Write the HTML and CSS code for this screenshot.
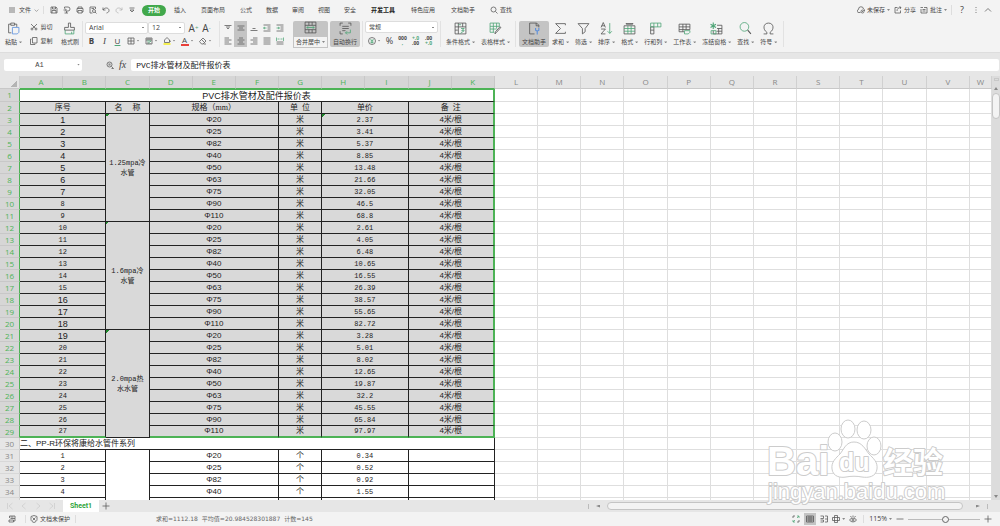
FILE: index.html
```html
<!DOCTYPE html>
<html lang="zh-CN">
<head>
    <meta charset="UTF-8">
    <meta name="viewport" content="width=device-width, initial-scale=1.0">
    <title>PVC排水管材及配件报价表</title>
    <link rel="stylesheet" href="styles.css">
</head>
<body>
    <!-- 图标 -->
    <svg class="sprite" aria-hidden="true">
        <symbol id="i-menu" viewBox="0 0 16 16"><path d="M2 4h12M2 8h12M2 12h12"/></symbol>
        <symbol id="i-down" viewBox="0 0 16 16"><path d="M2 5l6 6 6-6"/></symbol>
        <symbol id="i-up" viewBox="0 0 16 16"><path d="M2 11l6-6 6 6"/></symbol>
        <symbol id="i-save" viewBox="0 0 16 16"><path d="M2 2h10l2 2v10H2zM5 2v4h6V2M4 14V9h8v5"/></symbol>
        <symbol id="i-export" viewBox="0 0 16 16"><path d="M3 5V2h7a4 4 0 0 1 0 8H7v4M1 8h5M4 5l3 3-3 3M3 14h7"/></symbol>
        <symbol id="i-print" viewBox="0 0 16 16"><path d="M4 5V2h8v3M4 12H2V5h12v7h-2M4 9h8v5H4z"/></symbol>
        <symbol id="i-preview" viewBox="0 0 16 16"><path d="M13 6V2H2v12h5M5 5h5"/><circle cx="10" cy="10" r="3"/><path d="M12 12l3 3"/></symbol>
        <symbol id="i-undo" viewBox="0 0 16 16"><path d="M2 3v5h5M2 8c3-6 12-5 12 1 0 3-2 4-5 5"/></symbol>
        <symbol id="i-redo" viewBox="0 0 16 16"><path d="M14 3v5H9M14 8C11 2 2 3 2 9c0 3 2 4 5 5"/></symbol>
        <symbol id="i-more" viewBox="0 0 16 16"><path d="M3 4h10M4 8l4 4 4-4z"/></symbol>
        <symbol id="i-search" viewBox="0 0 16 16"><circle cx="7" cy="7" r="5"/><path d="M11 11l4 4"/></symbol>
        <symbol id="i-lookup" viewBox="0 0 16 16"><circle cx="7" cy="7" r="5"/><path d="M11 11l4 4M5 6h4M5 8h4M11 15h4"/></symbol>
        <symbol id="i-cloud" viewBox="0 0 16 16"><path d="M7 13H4a3 3 0 0 1-1-6 5 5 0 0 1 10-1 3 3 0 0 1 2 4"/><circle cx="11" cy="11" r="3"/><path d="M10 11h2"/></symbol>
        <symbol id="i-share" viewBox="0 0 16 16"><path d="M7 3H2v11h11V9M6 10c0-5 3-7 8-7M11 1l3 2-2 3"/></symbol>
        <symbol id="i-note" viewBox="0 0 16 16"><path d="M2 6v8h12V3H8M1 3h5M5 7h6M5 10h6"/></symbol>
        <symbol id="i-dots" viewBox="0 0 16 16"><path d="M8 2v2M8 7v2M8 12v2"/></symbol>

        <symbol id="i-paste" viewBox="0 0 24 24"><path d="M8 20H3V4h4M14 4h4v5M7 2h7v4H7z"/><path class="blue" d="M10 10h12v9l-3 3h-9z"/></symbol>
        <symbol id="i-cut" viewBox="0 0 16 16"><path d="M2 2l9 9M14 2l-9 9"/><circle cx="4" cy="12" r="2"/><circle cx="12" cy="12" r="2"/></symbol>
        <symbol id="i-copy" viewBox="0 0 16 16"><path d="M5 1h9v11H5zM3 4H1v11h9v-2"/></symbol>
        <symbol id="i-brush" viewBox="0 0 24 24"><path d="M10 2h4v8h7v5H3v-5h7z"/><path class="green" d="M4 15v7h16v-7M16 18v4"/></symbol>
        <symbol id="i-border" viewBox="0 0 16 16"><path d="M2 2h12v12H2zM8 2v12M2 8h12"/></symbol>
        <symbol id="i-cellstyle" viewBox="0 0 16 16"><path d="M2 2h12v12H2zM2 6h12M6 2v4M10 2v4M6 10v4M10 12v2"/><path class="green" d="M4 8l8 0-6 5"/></symbol>
        <symbol id="i-bucket" viewBox="0 0 16 16"><path d="M3 6l5-5 5 5v5H3zM13 6l2 4"/><path class="yellow" d="M1 14h14"/></symbol>
        <symbol id="i-eraser" viewBox="0 0 16 16"><path d="M1 9l7-7 6 6-6 6H5zM5 5l6 6M9 14h5"/></symbol>
        <symbol id="i-atop" viewBox="0 0 16 16"><path d="M1 3h14M4 6h8M6 9h4"/></symbol>
        <symbol id="i-amid" viewBox="0 0 16 16"><path d="M1 4h14M4 8h8M1 12h14"/></symbol>
        <symbol id="i-abot" viewBox="0 0 16 16"><path d="M5 9h6M1 13h14"/></symbol>
        <symbol id="i-outdent" viewBox="0 0 16 16"><path d="M1 2h14M9 6h6M9 10h6M1 14h14"/><path class="green" d="M7 8H1M4 6L1 8l3 2"/></symbol>
        <symbol id="i-indent" viewBox="0 0 16 16"><path d="M1 2h14M9 6h6M9 10h6M1 14h14"/><path class="green" d="M1 8h6M4 6l3 2-3 2"/></symbol>
        <symbol id="i-left" viewBox="0 0 16 16"><path d="M1 2h9M1 6h14M1 10h9M1 14h14"/></symbol>
        <symbol id="i-center" viewBox="0 0 16 16"><path d="M4 2h8M1 6h14M4 10h8M1 14h14"/></symbol>
        <symbol id="i-right" viewBox="0 0 16 16"><path d="M6 2h9M1 6h14M6 10h9M1 14h14"/></symbol>
        <symbol id="i-justify" viewBox="0 0 16 16"><path d="M1 2h14M1 6h14M1 10h14M1 14h14"/></symbol>
        <symbol id="i-spread" viewBox="0 0 16 16"><path d="M1 10h14M1 14h14"/><path class="green" d="M1 1v7M15 1v7M3 4h4M9 4h4"/></symbol>
        <symbol id="i-merge" viewBox="0 0 24 24"><path d="M2 2h20v20H2zM2 8h20M2 16h20M9 2v6M15 2v6M9 16v6M15 16v6"/><path class="green" d="M5 12h14M8 10l-3 2 3 2M16 10l3 2-3 2"/></symbol>
        <symbol id="i-wrap" viewBox="0 0 24 24"><path d="M2 7V2h5M17 2h5v5M2 17v5h5M6 8h12M6 12h12M6 16h6"/><path class="green" d="M21 14v6h-9M15 17l-3 3 3 3"/></symbol>
        <symbol id="i-yen" viewBox="0 0 16 16"><circle cx="8" cy="8" r="7"/><path class="green" d="M5 4l3 4 3-4M5 8h6M5 11h6M8 8v5"/></symbol>
        <symbol id="i-condfmt" viewBox="0 0 24 24"><path d="M2 2h20v20H2zM2 9h20M2 15h5M8 2v20M16 2v7"/><path class="green" d="M13 12h6l-5 4h5l-7 5M8 5h5"/></symbol>
        <symbol id="i-tblfmt" viewBox="0 0 24 24"><path class="green" d="M19 9V2H2v17h8M2 8h17M2 13h12M8 2v17M14 2v10"/><path d="M22 10l-8 9-3 3 1-4 8-9z"/></symbol>
        <symbol id="i-doc" viewBox="0 0 24 24"><path d="M12 22H3V2h13l4 4v4M15 2v5h5"/><path class="blue thick" d="M14 11v4l3 2 3-2v-4M17 17v6"/></symbol>
        <symbol id="i-sum" viewBox="0 0 24 24"><path d="M21 6V3H3l9 9-9 9h18v-3"/></symbol>
        <symbol id="i-filter" viewBox="0 0 24 24"><path d="M2 3h20l-7 9v6l-5 4V12z"/></symbol>
        <symbol id="i-sort" viewBox="0 0 24 24"><path d="M2 10l4-9 4 9M3 7h6M2 13h8L2 22h8"/><path class="green" d="M18 2v19M14 17l4 4 4-4"/></symbol>
        <symbol id="i-format" viewBox="0 0 24 24"><path d="M2 7h20v15H2zM6 2v2h12V2M6 3h12"/><path class="green" d="M2 12h20M2 17h20M9 7v15M15 7v15"/></symbol>
        <symbol id="i-rowcol" viewBox="0 0 24 24"><path d="M3 9h6v13H3zM3 15h6"/><path class="green" d="M3 2h19v7H3zM9 2v7M16 2v7"/></symbol>
        <symbol id="i-sheet" viewBox="0 0 24 24"><path d="M11 18H2V4h20v10M2 9h20M2 14h20M9 4v14M15 4v10"/><path class="green" d="M12 16h10v3l-3 3h-7z"/></symbol>
        <symbol id="i-freeze" viewBox="0 0 24 24"><path d="M13 6h9v16H6v-6M13 12h9M12 17h10M16 12v10"/><path class="green thick" d="M6 1v12M1 4l10 6M11 4L1 10"/><path class="green" d="M2 16v6h9v-6z"/></symbol>
        <symbol id="i-find" viewBox="0 0 24 24"><circle class="green" cx="10" cy="9" r="8"/><path class="thick" d="M16 15l6 7"/></symbol>
        <symbol id="i-omega" viewBox="0 0 24 24"><path d="M3 22h6v-3C1 14 2 2 12 2s11 12 3 17v3h6"/></symbol>

        <symbol id="i-first" viewBox="0 0 16 16"><path d="M3 2v12M13 2L6 8l7 6"/></symbol>
        <symbol id="i-prev" viewBox="0 0 16 16"><path d="M11 2L4 8l7 6"/></symbol>
        <symbol id="i-next" viewBox="0 0 16 16"><path d="M5 2l7 6-7 6"/></symbol>
        <symbol id="i-last" viewBox="0 0 16 16"><path d="M13 2v12M3 2l7 6-7 6"/></symbol>
        <symbol id="i-plus" viewBox="0 0 16 16"><path d="M8 1v14M1 8h14"/></symbol>
        <symbol id="i-minus" viewBox="0 0 16 16"><path d="M1 8h14"/></symbol>
        <symbol id="i-macro" viewBox="0 0 16 16"><path d="M3 6V2h11v5H5M2 10h9v4H2zM14 7v5h-3M5 4h6"/></symbol>
        <symbol id="i-shield" viewBox="0 0 16 16"><path d="M8 1l6 2v6c0 3-3 5-6 6-3-1-6-3-6-6V3zM5 5l6 6M11 5l-6 6"/></symbol>
        <symbol id="i-full" viewBox="0 0 16 16"><path d="M2 6V2h4M14 10v4h-4"/><path class="green" d="M10 2h4v4M14 2l-4 4M6 14H2v-4M2 14l4-4"/></symbol>
        <symbol id="i-grid" viewBox="0 0 16 16"><path d="M1 2h14v12H1zM1 6h14M1 10h14M6 2v12M10 2v12"/></symbol>
        <symbol id="i-page" viewBox="0 0 16 16"><path d="M1 2h6v5H1M10 2h5v12h-5M1 10h6v4H1M10 8h5"/></symbol>
        <symbol id="i-focus" viewBox="0 0 16 16"><path d="M1 5h14v6H1zM5 1h6v14H5z"/></symbol>
        <symbol id="i-eye" viewBox="0 0 16 16"><path d="M1 10c3-5 11-5 14 0-3 5-11 5-14 0zM8 1v3M3 2l2 3M13 2l-2 3"/><circle cx="8" cy="10" r="2"/></symbol>
    </svg>

    <header class="menubar">
        <button class="menu-btn file"><svg class="icon"><use href="#i-menu"/></svg>文件<svg class="icon tiny"><use href="#i-down"/></svg></button>
        <div class="quick">
            <button aria-label="保存"><svg class="icon"><use href="#i-save"/></svg></button>
            <button aria-label="输出"><svg class="icon"><use href="#i-export"/></svg></button>
            <button aria-label="打印"><svg class="icon"><use href="#i-print"/></svg></button>
            <button aria-label="打印预览"><svg class="icon"><use href="#i-preview"/></svg></button>
            <button aria-label="撤销"><svg class="icon"><use href="#i-undo"/></svg></button>
            <button aria-label="恢复" disabled><svg class="icon"><use href="#i-redo"/></svg></button>
            <button aria-label="更多"><svg class="icon"><use href="#i-more"/></svg></button>
        </div>
        <nav class="tabs">
            <button class="tab active">开始</button>
            <button class="tab">插入</button>
            <button class="tab wide">页面布局</button>
            <button class="tab">公式</button>
            <button class="tab">数据</button>
            <button class="tab">审阅</button>
            <button class="tab">视图</button>
            <button class="tab">安全</button>
            <button class="tab wide dark">开发工具</button>
            <button class="tab wide">特色应用</button>
            <button class="tab wide">文档助手</button>
            <button class="menu-btn"><svg class="icon"><use href="#i-search"/></svg>查找</button>
        </nav>
        <div class="menu-right">
            <button class="menu-btn"><svg class="icon"><use href="#i-cloud"/></svg>未保存<i class="caret"></i></button>
            <button class="menu-btn"><svg class="icon"><use href="#i-share"/></svg>分享</button>
            <button class="menu-btn"><svg class="icon"><use href="#i-note"/></svg>批注<i class="caret"></i></button>
            <span class="divider"></span>
            <button class="help" aria-label="帮助">?</button>
            <button aria-label="选项"><svg class="icon"><use href="#i-dots"/></svg></button>
            <button aria-label="收起功能区"><svg class="icon"><use href="#i-up"/></svg></button>
        </div>
    </header>

    <div class="ribbon">
        <div class="group clipboard">
            <button class="big"><svg class="icon large"><use href="#i-paste"/></svg><span>粘贴<i class="caret"></i></span></button>
            <div class="rows">
                <button class="menu-btn"><svg class="icon"><use href="#i-cut"/></svg>剪切</button>
                <button class="menu-btn"><svg class="icon"><use href="#i-copy"/></svg>复制</button>
            </div>
            <button class="big"><svg class="icon large"><use href="#i-brush"/></svg><span>格式刷</span></button>
        </div>
        <div class="group font">
            <div class="rows">
                <div class="row">
                    <select class="font-name" aria-label="字体"><option>Arial</option></select>
                    <select class="font-size" aria-label="字号"><option>12</option></select>
                    <button class="letter" aria-label="增大字号">A<sup>+</sup></button>
                    <button class="letter" aria-label="减小字号">A<sup>-</sup></button>
                </div>
                <div class="row">
                    <button class="cell bold" aria-label="加粗">B</button>
                    <button class="cell italic" aria-label="倾斜">I</button>
                    <button class="cell underline" aria-label="下划线">U</button>
                    <button class="drop" aria-label="边框"><svg class="icon"><use href="#i-border"/></svg><i class="caret"></i></button>
                    <button class="drop" aria-label="单元格样式"><svg class="icon"><use href="#i-cellstyle"/></svg><i class="caret"></i></button>
                    <button class="drop" aria-label="填充颜色"><svg class="icon"><use href="#i-bucket"/></svg><i class="caret"></i></button>
                    <button class="drop" aria-label="字体颜色"><span class="font-color">A</span><i class="caret"></i></button>
                    <button class="drop" aria-label="清除"><svg class="icon"><use href="#i-eraser"/></svg><i class="caret"></i></button>
                </div>
            </div>
        </div>
        <div class="group align">
            <div class="rows">
                <div class="row">
                    <button class="cell" aria-label="顶端对齐"><svg class="icon"><use href="#i-atop"/></svg></button>
                    <button class="cell on" aria-label="垂直居中"><svg class="icon"><use href="#i-amid"/></svg></button>
                    <button class="cell" aria-label="底端对齐"><svg class="icon"><use href="#i-abot"/></svg></button>
                    <button class="cell" aria-label="减少缩进"><svg class="icon"><use href="#i-outdent"/></svg></button>
                    <button class="cell" aria-label="增加缩进"><svg class="icon"><use href="#i-indent"/></svg></button>
                </div>
                <div class="row">
                    <button class="cell" aria-label="左对齐"><svg class="icon"><use href="#i-left"/></svg></button>
                    <button class="cell on" aria-label="水平居中"><svg class="icon"><use href="#i-center"/></svg></button>
                    <button class="cell" aria-label="右对齐"><svg class="icon"><use href="#i-right"/></svg></button>
                    <button class="cell" aria-label="两端对齐"><svg class="icon"><use href="#i-justify"/></svg></button>
                    <button class="cell" aria-label="分散对齐"><svg class="icon"><use href="#i-spread"/></svg></button>
                </div>
            </div>
            <button class="big on merge"><svg class="icon large"><use href="#i-merge"/></svg><span>合并居中<i class="caret"></i></span></button>
            <button class="big on"><svg class="icon large"><use href="#i-wrap"/></svg><span>自动换行</span></button>
        </div>
        <div class="group number">
            <div class="rows">
                <select class="num-format" aria-label="数字格式"><option>常规</option></select>
                <div class="row">
                    <button class="drop" aria-label="货币"><svg class="icon"><use href="#i-yen"/></svg><i class="caret"></i></button>
                    <button class="cell percent" aria-label="百分比">%</button>
                    <button class="cell digits" aria-label="千位分隔"><b>000</b><b class="mark">,</b></button>
                    <button class="cell digits" aria-label="增加小数位"><b class="mark">+.0</b><b>.00</b></button>
                    <button class="cell digits" aria-label="减少小数位"><b>.00</b><b class="mark">+.0</b></button>
                </div>
            </div>
        </div>
        <div class="group plain">
            <button class="big"><svg class="icon large"><use href="#i-condfmt"/></svg><span>条件格式<i class="caret"></i></span></button>
            <button class="big"><svg class="icon large"><use href="#i-tblfmt"/></svg><span>表格样式<i class="caret"></i></span></button>
        </div>
        <div class="group plain tools">
            <button class="big on"><svg class="icon large"><use href="#i-doc"/></svg><span>文档助手</span></button>
            <button class="big"><svg class="icon large"><use href="#i-sum"/></svg><span>求和<i class="caret"></i></span></button>
            <button class="big"><svg class="icon large"><use href="#i-filter"/></svg><span>筛选<i class="caret"></i></span></button>
            <button class="big"><svg class="icon large"><use href="#i-sort"/></svg><span>排序<i class="caret"></i></span></button>
            <button class="big"><svg class="icon large"><use href="#i-format"/></svg><span>格式<i class="caret"></i></span></button>
            <button class="big"><svg class="icon large"><use href="#i-rowcol"/></svg><span>行和列<i class="caret"></i></span></button>
            <button class="big"><svg class="icon large"><use href="#i-sheet"/></svg><span>工作表<i class="caret"></i></span></button>
            <button class="big"><svg class="icon large"><use href="#i-freeze"/></svg><span>冻结窗格<i class="caret"></i></span></button>
            <button class="big"><svg class="icon large"><use href="#i-find"/></svg><span>查找<i class="caret"></i></span></button>
            <button class="big"><svg class="icon large"><use href="#i-omega"/></svg><span>符号<i class="caret"></i></span></button>
        </div>
    </div>

    <div class="formula-bar">
        <div class="name-box">
            <input type="text" value="A1" aria-label="名称框">
            <i class="caret"></i>
        </div>
        <button aria-label="浏览公式"><svg class="icon"><use href="#i-lookup"/></svg></button>
        <button class="fx" aria-label="插入函数">fx</button>
        <input class="formula" type="text" value="PVC排水管材及配件报价表" aria-label="编辑栏">
    </div>

    <main class="workspace">
        <div class="sheet">
            <table class="grid">
                <colgroup id="cols"></colgroup>
                <thead><tr id="head"></tr></thead>
                <tbody id="body"></tbody>
            </table>
        </div>
        <div class="vscroll">
            <span class="split"></span>
            <button class="arrow up" aria-label="向上滚动"></button>
            <span class="thumb"></span>
            <button class="arrow down" aria-label="向下滚动"></button>
        </div>
        <svg class="watermark" viewBox="0 0 184 92">
            <text class="latin" x="3" y="57">Bai</text>
            <ellipse cx="71" cy="24" rx="7" ry="9"/>
            <ellipse cx="84" cy="11" rx="7" ry="9"/>
            <ellipse cx="100" cy="12" rx="7" ry="9"/>
            <ellipse cx="110" cy="28" rx="7" ry="9"/>
            <path d="M90 24c-8 0-10 7-14 12-4 4-9 8-8 15 1 8 9 9 14 8 5-1 11-1 16 0 6 1 14 0 15-8 1-7-4-11-8-15-4-5-7-12-15-12z"/>
            <text class="du" x="75" y="53">du</text>
            <text class="han" x="119" y="55">经验</text>
            <text class="url" x="4" y="81">jingyan.baidu.com</text>
        </svg>
    </main>

    <div class="sheetbar">
        <div class="sheet-nav">
            <button aria-label="第一个工作表"><svg class="icon"><use href="#i-first"/></svg></button>
            <button aria-label="上一个工作表"><svg class="icon"><use href="#i-prev"/></svg></button>
            <button aria-label="下一个工作表"><svg class="icon"><use href="#i-next"/></svg></button>
            <button aria-label="最后一个工作表"><svg class="icon"><use href="#i-last"/></svg></button>
        </div>
        <button class="sheet-tab">Sheet1</button>
        <button class="add" aria-label="新建工作表"><svg class="icon"><use href="#i-plus"/></svg></button>
        <div class="hscroll">
            <span class="grip"></span>
            <button class="arrow left" aria-label="向左滚动"></button>
            <span class="thumb"></span>
            <button class="arrow right" aria-label="向右滚动"></button>
            <span class="grip"></span>
        </div>
    </div>

    <footer class="status">
        <button class="macro" aria-label="宏"><svg class="icon"><use href="#i-macro"/></svg></button>
        <button class="menu-btn protect"><svg class="icon"><use href="#i-shield"/></svg>文档未保护</button>
        <div class="summary"><span>求和=1112.18</span><span>平均值=20.984528301887</span><span>计数=145</span></div>
        <div class="views">
            <button aria-label="全屏"><svg class="icon"><use href="#i-full"/></svg></button>
            <button class="on" aria-label="普通视图"><svg class="icon"><use href="#i-grid"/></svg></button>
            <button aria-label="分页预览"><svg class="icon"><use href="#i-page"/></svg></button>
            <button aria-label="阅读模式"><svg class="icon"><use href="#i-focus"/></svg><i class="caret"></i></button>
            <button aria-label="护眼模式"><svg class="icon"><use href="#i-eye"/></svg></button>
        </div>
        <div class="zoom">
            <button class="menu-btn level">115%<i class="caret"></i></button>
            <button aria-label="缩小"><svg class="icon"><use href="#i-minus"/></svg></button>
            <input type="range" min="0" max="100" value="52" aria-label="显示比例">
            <button aria-label="放大"><svg class="icon"><use href="#i-plus"/></svg></button>
        </div>
    </footer>

    <script>
        const letters = 'ABCDEFGHIJKLMNOPQRSTUVW'.split('');
        const sizes = ['Φ20', 'Φ25', 'Φ82', 'Φ40', 'Φ50', 'Φ63', 'Φ75', 'Φ90', 'Φ110'];
        const prices = [
            '2.37', '3.41', '5.37', '8.85', '13.48', '21.66', '32.05', '46.5', '68.8',
            '2.61', '4.05', '6.48', '10.65', '16.55', '26.39', '38.57', '55.65', '82.72',
            '3.28', '5.01', '8.02', '12.65', '19.87', '32.2', '45.55', '65.84', '97.97'
        ];
        const names = ['1.25mpa冷<br>水管', '1.6mpa冷<br>水管', '2.0mpa热<br>水水管'];
        const fittings = ['0.34', '0.52', '0.92', '1.55'];
        // 用 Arial 字体的序号
        const sansNumbers = [1, 2, 3, 4, 5, 6, 7, 16, 17, 18, 19];

        function cell(text, span, cls) {
            return `<td colspan="${span}" class="${cls || ''}">${text}</td>`;
        }

        function addRow(n, html, cls) {
            const blanks = '<td class="blank"></td>'.repeat(12);
            return `<tr class="${cls}"><th scope="row">${n}</th>${html}${blanks}</tr>`;
        }

        document.getElementById('cols').innerHTML =
            '<col class="col-num">' + '<col>'.repeat(22) + '<col class="col-last">';
        document.getElementById('head').innerHTML = '<th class="corner"></th>' +
            letters.map((l, i) => `<th scope="col" class="${i < 11 ? 'sel' : ''}">${l}</th>`).join('');

        let html = addRow(1, cell('PVC排水管材及配件报价表', 11, 'title edge'), 'sel first');
        html += addRow(2, cell('序号', 2) + cell('名　 称', 1) + cell('规格（mm）', 3) +
            cell('单&nbsp; 位', 1) + cell('单价', 2) + cell('备&nbsp; 注', 2, 'edge'), 'sel');

        prices.forEach((price, i) => {
            const no = i + 1;
            let row = cell(no, 2, sansNumbers.includes(no) ? 'sans' : 'mono');
            if (i % 9 === 0) {
                row += `<td rowspan="9" class="mono flag">${names[i / 9]}</td>`;
            }
            row += cell(sizes[i % 9], 3, 'size') + cell('米', 1) +
                cell(price, 2, i === 0 ? 'mono flag' : 'mono') + cell('4米/根', 2, 'remark edge');
            html += addRow(no + 2, row, i === prices.length - 1 ? 'sel last' : 'sel');
        });

        html += addRow(30, cell('二、PP-R环保将康给水管件系列', 11, 'section'), '');
        fittings.forEach((price, i) => {
            html += addRow(31 + i, cell(i + 1, 2, 'mono') +
                (i === 0 ? '<td rowspan="5"></td>' : '') +
                cell(sizes[i], 3, 'size') + cell('个', 1) +
                cell(price, 2, 'mono') + cell('', 2), '');
        });
        // 末尾空行
        html += addRow('', cell('', 2) + cell('', 3) + cell('', 1) + cell('', 2) + cell('', 2), '');
        document.getElementById('body').innerHTML = html;
    </script>
</body>
</html>
```
FILE: styles.css
```css
* {
    margin: 0;
    padding: 0;
    box-sizing: border-box;
}

body {
    display: flex;
    flex-direction: column;
    height: 100vh;
    overflow: hidden;
    font-family: "Open Sans", "Noto Sans CJK SC", sans-serif;
    font-size: 6px;
    line-height: 8px;
    color: #444;
    background: #f3f3f3;
}

button,
input,
select {
    font: inherit;
    color: inherit;
    border: none;
    background: none;
    outline: none;
    white-space: nowrap;
}

button {
    display: flex;
    align-items: center;
    justify-content: center;
}

button:disabled {
    opacity: 0.4;
}

/* 图标 */
.sprite {
    position: absolute;
    width: 0;
    height: 0;
}

.icon {
    width: 8px;
    height: 8px;
    flex: none;
    fill: none;
    stroke: #555;
    stroke-width: 1.5;
}

.icon.tiny {
    width: 5px;
    height: 5px;
}

.icon.large {
    width: 13px;
    height: 13px;
}

.green {
    stroke: #4fa577;
}

.blue {
    stroke: #5b8fdc;
}

.yellow {
    stroke: #f5ee1c;
    stroke-width: 3;
}

.thick {
    stroke-width: 2;
}

.caret {
    flex: none;
    display: inline-block;
    width: 3px;
    height: 2px;
    margin-left: 2px;
    vertical-align: middle;
    background: #888;
    clip-path: polygon(0 0, 100% 0, 50% 100%);
}

.menu-btn {
    gap: 2px;
}

.menu-btn .caret {
    margin-left: 0;
}

.divider {
    width: 1px;
    height: 10px;
    background: #ddd;
}

/* 菜单栏 */
.menubar {
    display: flex;
    align-items: center;
    height: 20px;
    padding: 0 8px;
    flex: none;
}

.file {
    gap: 3px;
    padding-right: 4px;
    border-right: 1px solid #ddd;
}

.quick {
    display: flex;
    gap: 5px;
    padding: 0 6px;
}

.tabs {
    display: flex;
    align-items: center;
    gap: 14px;
}

.tab {
    min-width: 12px;
    height: 11px;
}

.tab.wide {
    min-width: 26px;
}

.tab.dark {
    color: #222;
    font-weight: bold;
}

.tab.active {
    width: 24px;
    margin-right: -6px;
    border-radius: 6px;
    color: #fff;
    font-weight: bold;
    background: #41a84b;
}

.menu-right {
    display: flex;
    align-items: center;
    gap: 4px;
    margin-left: auto;
}

.help {
    width: 12px;
    font-size: 9px;
}

/* 功能区 */
.ribbon {
    display: flex;
    height: 33px;
    padding: 1px 2px 5px;
    flex: none;
    border-bottom: 1px solid #ddd;
}

.group {
    display: flex;
    gap: 2px;
    padding: 0 2px;
    border-right: 1px solid #e2e2e2;
}

.group.plain {
    gap: 0;
}

.rows {
    display: flex;
    flex-direction: column;
    justify-content: space-between;
}

.row {
    display: flex;
    align-items: center;
    height: 13px;
}

.rows > .menu-btn {
    height: 12px;
}

.big {
    flex-direction: column;
    gap: 3px;
    padding: 0 3px;
    border-radius: 2px;
}

.clipboard .big {
    padding: 0 1px;
}

.clipboard {
    width: 81px;
    justify-content: space-between;
}

.big.on {
    background: #c4c4c4;
}

.merge {
    padding: 0;
    gap: 2px;
}

.merge span {
    padding: 1px 2px;
    border: 1px solid #c4c4c4;
    background: #f3f3f3;
}

.cell {
    width: 13px;
    height: 13px;
}

.cell.on {
    background: #c4c4c4;
}

.drop {
    width: 18px;
    height: 13px;
}

.bold {
    font-size: 8px;
    font-weight: bold;
}

.italic {
    font-family: "Liberation Serif", serif;
    font-size: 9px;
    font-style: italic;
}

.underline {
    font-size: 8px;
    text-decoration: underline;
    text-decoration-color: #4fa577;
}

.font-color {
    width: 8px;
    font-size: 8px;
    line-height: 8px;
    border-bottom: 2px solid #e8403a;
}

.letter {
    width: 13px;
    font-size: 10px;
}

.letter sup {
    font-size: 6px;
    line-height: 6px;
    color: #4fa577;
}

.font {
    width: 137px;
}

select {
    appearance: none;
    height: 12px;
    padding: 0 3px;
    border: 1px solid #ddd;
    border-radius: 2px;
    background: #fff linear-gradient(#888, #888) no-repeat right 3px center / 2px 1px;
    font-size: 7px;
    line-height: 10px;
}

.font-name {
    width: 63px;
}

.font-size {
    width: 37px;
    margin-right: 2px;
}

.num-format {
    width: 73px;
    font-size: 6px;
}

.align {
    padding-left: 1px;
}

.align .rows {
    margin-right: 5px;
}

.percent {
    font-size: 9px;
}

.digits {
    flex-direction: column;
    font-size: 5px;
    line-height: 5px;
}

.mark {
    color: #4fa577;
}

.tools {
    padding-left: 3px;
    padding-right: 3px;
}

/* 编辑栏 */
.formula-bar {
    display: flex;
    align-items: center;
    gap: 5px;
    height: 23px;
    padding: 0 1px 0 4px;
    flex: none;
    background: #e6e6e6;
}

.name-box {
    display: flex;
    align-items: center;
    width: 78px;
    height: 12px;
    margin-right: 19px;
    padding-right: 2px;
    border-radius: 2px;
    background: #fff;
}

.name-box input {
    flex: 1;
    min-width: 0;
    font-family: "Liberation Mono", monospace;
    font-size: 7px;
    text-align: center;
}

.fx {
    font-family: "Liberation Serif", serif;
    font-size: 10px;
    font-style: italic;
}

.formula {
    flex: 1;
    height: 12px;
    padding: 0 5px;
    border-radius: 2px;
    background: #fff;
    color: #222;
    font-family: "Liberation Mono", "Noto Sans CJK SC", monospace;
    font-size: 8px;
}

/* 表格 */
.workspace {
    position: relative;
    display: flex;
    flex: 1;
    min-height: 0;
}

.sheet {
    flex: 1;
    min-width: 0;
    overflow: hidden;
    background: #fff;
}

.grid {
    width: 100%;
    table-layout: fixed;
    border-spacing: 0;
}

.col-num {
    width: 20px;
}

.col-last {
    width: 22px;
}

.grid th {
    height: 12px;
    font-size: 8px;
    font-weight: normal;
    line-height: 10px;
    color: #888;
    background: #e6e6e6;
    border-right: 1px solid #d0d0d0;
    border-bottom: 1px solid #d8d8d8;
}

.grid thead th {
    height: 13px;
    border-bottom-color: #c8c8c8;
}

.grid thead .sel {
    color: #4db356;
    background: #d6d6d6;
    border-right-color: #c8c8c8;
    border-bottom-color: #4db356;
}

.grid .corner {
    background: linear-gradient(135deg, transparent 50%, #b4b4b4 50%) no-repeat 10px 4px / 7px 7px #e6e6e6;
}

.grid tbody .sel th {
    color: #4db356;
    background: #d6d6d6;
    border-right-color: #4db356;
    border-bottom-color: #c8c8c8;
}

.grid td {
    height: 12px;
    overflow: hidden;
    border-right: 1px solid #222;
    border-bottom: 1px solid #222;
    color: #222;
    font-family: "Liberation Serif", "Noto Sans CJK SC", serif;
    font-size: 8px;
    line-height: 10px;
    text-align: center;
    white-space: nowrap;
}

.grid .sel td {
    background-color: #d9d9d9;
}

.grid td.blank,
.grid .sel td.blank {
    background: none;
    border-color: #dedede;
}

.grid .sel .title {
    height: 13px;
    border-top: 1px solid #4db356;
    background: #fff;
    font-family: "Liberation Sans", "Noto Sans CJK SC", sans-serif;
    font-size: 9px;
}

.grid .sel .edge {
    border-right: 2px solid #4db356;
}

.grid .last td:not(.blank) {
    border-bottom: 2px solid #4db356;
}

.grid .sans {
    font-family: "Liberation Sans", sans-serif;
    font-size: 9px;
}

.grid .mono {
    font-family: "Liberation Mono", "Noto Sans CJK SC", monospace;
    font-size: 7px;
}

.grid .size,
.grid .remark {
    font-family: "Liberation Sans", "Noto Sans CJK SC", sans-serif;
}

.grid .flag {
    background-image: linear-gradient(135deg, #1e8a2c 50%, transparent 50%);
    background-repeat: no-repeat;
    background-size: 3px 3px;
}

.grid .section {
    font-family: "Liberation Sans", "Noto Sans CJK SC", sans-serif;
    font-size: 8px;
    text-align: left;
}

/* 水印 */
.watermark {
    position: absolute;
    right: 52px;
    bottom: -10px;
    width: 184px;
    height: 92px;
    overflow: visible;
    pointer-events: none;
    fill: #fff;
    stroke: #ccc;
    stroke-width: 1;
    stroke-linejoin: round;
    font-family: "Liberation Sans", "Noto Sans CJK SC", sans-serif;
    font-weight: bold;
}

.watermark text {
    stroke-width: 2;
    paint-order: stroke;
}

.watermark .latin {
    font-size: 40px;
}

.watermark .du {
    font-size: 25px;
}

.watermark .han {
    font-size: 30px;
}

.watermark .url {
    font-size: 22px;
    font-weight: normal;
}

/* 滚动条 */
.vscroll {
    display: flex;
    flex-direction: column;
    align-items: center;
    gap: 3px;
    width: 8px;
    padding: 2px 0;
    background: #dcdcdc;
}

.split {
    width: 5px;
    height: 3px;
    border: 1px solid #c8c8c8;
}

.thumb {
    border: 1px solid #c4c4c4;
    border-radius: 4px;
    background: #f3f3f3;
}

.vscroll .thumb {
    width: 8px;
    height: 26px;
}

.arrow {
    width: 4px;
    height: 3px;
    background: #888;
}

.up {
    margin-top: 3px;
    clip-path: polygon(0 100%, 100% 100%, 50% 0);
}

.down {
    margin-top: auto;
    clip-path: polygon(0 0, 100% 0, 50% 100%);
}

.left {
    clip-path: polygon(100% 0, 100% 100%, 0 50%);
}

.right {
    clip-path: polygon(0 0, 0 100%, 100% 50%);
}

/* 工作表标签 */
.sheetbar {
    display: flex;
    align-items: center;
    height: 12px;
    flex: none;
    background: #e6e6e6;
}

.sheet-nav {
    display: flex;
    gap: 6px;
    width: 63px;
    padding-left: 6px;
}

.sheet-nav .icon {
    stroke: #ccc;
}

.sheet-tab {
    width: 36px;
    height: 12px;
    background: #fff;
    color: #2fa53c;
    font-family: Roboto, sans-serif;
    font-size: 7px;
    font-weight: bold;
}

.add {
    padding: 0 3px;
}

.hscroll {
    display: flex;
    align-items: center;
    gap: 7px;
    flex: 0 1 412px;
    height: 9px;
    margin-left: auto;
    padding: 0 12px 0 0;
}

.hscroll .thumb {
    flex: 1;
    height: 8px;
    margin-right: 6px;
}

.grip {
    width: 1px;
    height: 5px;
    background: #bbb;
}

/* 状态栏 */
.status {
    display: flex;
    align-items: center;
    height: 14px;
    padding: 0 8px;
    flex: none;
}

.macro {
    width: 18px;
    justify-content: flex-start;
    border-right: 1px solid #ddd;
}

.protect {
    margin-left: 4px;
    padding-right: 5px;
    border-right: 1px solid #ddd;
}

.summary {
    display: flex;
    gap: 4px;
    margin-left: 80px;
    color: #666;
    font-size: 7px;
}

.summary span {
    font-size: 6px;
    font-family: "DejaVu Sans", "Noto Sans CJK SC", sans-serif;
}

.views {
    display: flex;
    align-items: center;
    gap: 3px;
    margin-left: auto;
}

.views button {
    min-width: 10px;
    height: 12px;
}

.views .on {
    width: 12px;
    background: #c4c4c4;
}

.zoom {
    display: flex;
    align-items: center;
    gap: 4px;
    margin-left: 5px;
    padding-left: 5px;
    border-left: 1px solid #ddd;
}

.level {
    font-size: 7px;
}

input[type="range"] {
    appearance: none;
    width: 72px;
    height: 8px;
    background: linear-gradient(#bbb, #bbb) no-repeat center / 100% 1px;
}

input[type="range"]::-webkit-slider-thumb {
    appearance: none;
    width: 7px;
    height: 7px;
    border: 1px solid #666;
    border-radius: 50%;
    background: #f3f3f3;
}
```
